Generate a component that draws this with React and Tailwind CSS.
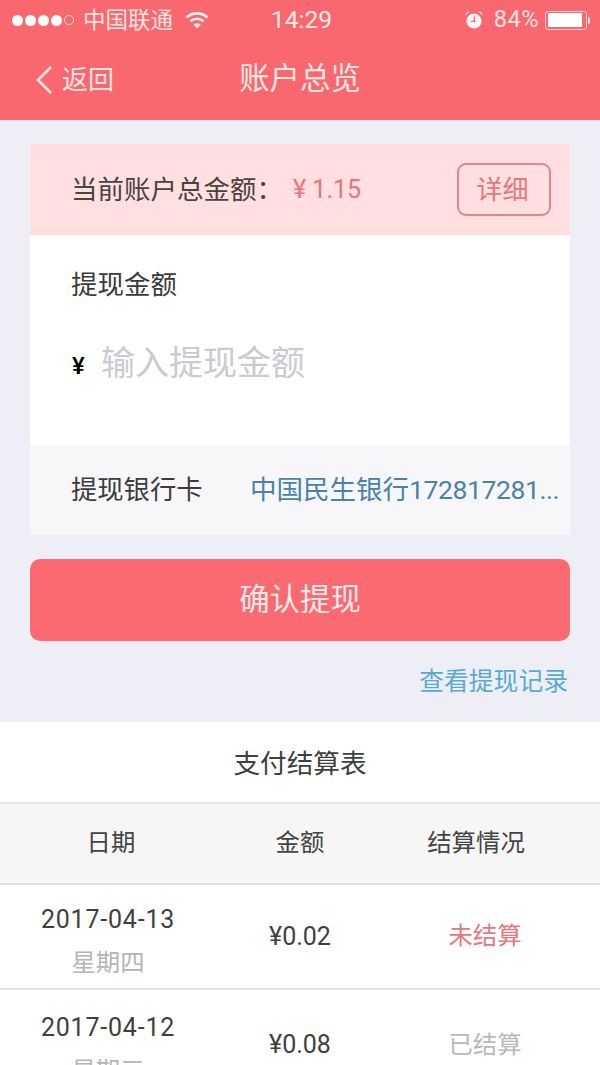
import React from 'react'

const cjk = "font-['Roboto','Noto_Sans_CJK_SC',sans-serif]"

function Wifi() {
  return (
    <svg width="24" height="18" viewBox="0 0 24 18" className="ml-[12px]">
      <path d="M1.5 6.5C7.5 1 16.5 1 22.5 6.5" fill="none" stroke="#fff" strokeOpacity="0.9" strokeWidth="2.6" />
      <path d="M5.5 10.2C9.3 7 14.7 7 18.5 10.2" fill="none" stroke="#fff" strokeOpacity="0.9" strokeWidth="2.6" />
      <path d="M12 17.5L8.2 13.4C10.4 11.8 13.6 11.8 15.8 13.4Z" fill="#fff" fillOpacity="0.9" />
    </svg>
  )
}

function Alarm() {
  return (
    <svg width="20" height="20" viewBox="0 0 20 20" className="-ml-[1px]">
      <circle cx="10" cy="11" r="7.6" fill="#fff" fillOpacity="0.92" />
      <path d="M10.3 6.5V11.4H6.8" fill="none" stroke="#f8686e" strokeWidth="1.4" />
      <path d="M1 5.5C1.4 2.8 3.4 1.2 5.8 1.4ZM19 5.5C18.6 2.8 16.6 1.2 14.2 1.4Z" fill="#fff" fillOpacity="0.92" />
    </svg>
  )
}

function StatusBar() {
  return (
    <div className="relative flex h-[40px] items-center pl-[12px] pr-[10px] text-[#fde2e3]">
      <div className="flex items-center gap-[2px]">
        {[0, 1, 2, 3].map((i) => (
          <span key={i} className="h-[11px] w-[11px] rounded-full bg-white" />
        ))}
        <span className="h-[10px] w-[10px] rounded-full border border-white/80" />
      </div>
      <span className="ml-[9px] text-[22.5px] leading-none">中国联通</span>
      <Wifi />
      <span className="absolute left-[3px] right-0 top-[6px] text-center text-[24.5px] leading-[28px] text-[#fdecec]">14:29</span>
      <div className="ml-auto flex items-center">
        <Alarm />
        <span className="ml-[10px] text-[23.5px] leading-none tracking-[0.5px]">84%</span>
        <div className="ml-[6px] flex h-[19px] w-[42px] items-center rounded-[3px] border border-white/70 p-[1.5px]">
          <div className="h-full w-[34px] rounded-[1px] bg-white" />
        </div>
        <span className="ml-[1px] h-[7px] w-[2px] rounded-r-full bg-white/80" />
      </div>
    </div>
  )
}

function NavBar() {
  return (
    <div className="relative flex h-[80px] items-center pb-[1px] pl-[35px] text-[#fde6e6]">
      <svg width="18" height="30" viewBox="0 0 18 30">
        <path d="M16 2L3 15L16 28" fill="none" stroke="#fde6e6" strokeWidth="2.6" />
      </svg>
      <span className="ml-[9px] text-[26px] leading-none">返回</span>
      <span className="absolute inset-x-0 text-center text-[30.4px] leading-none">账户总览</span>
    </div>
  )
}

function Card() {
  return (
    <div className="mx-[30px] mt-[24px]">
      <div className="flex h-[91px] items-center bg-[#ffdfe0] pl-[41px] pr-[19px]">
        <span className="mt-[1px] w-[222px] text-[26.5px] leading-none text-[#4a4243]">当前账户总金额：</span>
        <span className="text-[25px] leading-none text-[#ec7378]">¥ 1.15</span>
        <div className="ml-auto flex h-[53px] w-[94px] items-center justify-center rounded-[9px] border-2 border-[#e3878b] pr-[3px] pt-[2px] text-[26px] text-[#e5777c]">详细</div>
      </div>
      <div className="h-[210px] bg-white pl-[41px]">
        <div className="pt-[36px] text-[26.5px] leading-[28px] text-[#3a3a3a]">提现金额</div>
        <div className="mt-[43px] flex items-center">
          <span className="mt-[6px] w-[30px] pl-[1px] text-[24px] font-medium leading-none text-black">¥</span>
          <span className="text-[34px] leading-[42px] text-[#c9cbd1]">输入提现金额</span>
        </div>
      </div>
      <div className="flex h-[90px] items-center bg-[#f7f7f9] pl-[41px]">
        <span className="w-[179px] text-[26.3px] leading-none text-[#3c3c3c]">提现银行卡</span>
        <span className="text-[26.5px] leading-none text-[#4b82ad]">
          中国民生银行<span className="tracking-[-0.4px]">172817281...</span>
        </span>
      </div>
    </div>
  )
}

const rows = [
  { date: '2017-04-13', week: '星期四', money: '¥0.02', state: '未结算', color: 'text-[#e8787c]', height: 'h-[105px]' },
  { date: '2017-04-12', week: '星期三', money: '¥0.08', state: '已结算', color: 'text-[#b9b9b9]', height: 'h-[112px]' },
]

function Table() {
  return (
    <div className="mt-[23px] bg-white">
      <div className="flex h-[82px] items-center justify-center border-b-2 border-[#e4e4e4] pt-[3px] text-[26.6px] text-[#3f3f3f]">支付结算表</div>
      <div className="grid h-[81px] grid-cols-[222px_156px_196px] items-center border-b-2 border-[#e0e0e0] bg-[#f6f6f6] text-center text-[24.4px] text-[#444]">
        <span>日期</span>
        <span>金额</span>
        <span>结算情况</span>
      </div>
      {rows.map((r) => (
        <div key={r.date} className={`grid grid-cols-[216px_168px_202px] items-center border-b-2 border-[#e2e2e2] text-center ${r.height}`}>
          <div className="pt-[9px]">
            <div className="text-[25px] leading-[34px] tracking-[0.8px] text-[#3f3f3f]">{r.date}</div>
            <div className="mt-[9px] text-[24.4px] leading-[34px] text-[#b5b5b5]">{r.week}</div>
          </div>
          <div className="text-[25px] text-[#3f3f3f]">{r.money}</div>
          <div className={`text-[24.4px] ${r.color}`}>{r.state}</div>
        </div>
      ))}
    </div>
  )
}

export default function App() {
  return (
    <div className={`h-[1065px] w-[600px] overflow-hidden bg-[#eeeff6] ${cjk}`}>
      <div className="h-[120px] bg-[#f9686e]">
        <StatusBar />
        <NavBar />
      </div>
      <Card />
      <button className="mx-[30px] mt-[24px] block h-[82px] w-[540px] rounded-[10px] bg-[#fb6a70] text-[30.4px] text-[#fdeaea]">确认提现</button>
      <div className="mr-[32px] mt-[24px] text-right text-[24.8px] leading-[34px] text-[#5aa9d3]">查看提现记录</div>
      <Table />
    </div>
  )
}
